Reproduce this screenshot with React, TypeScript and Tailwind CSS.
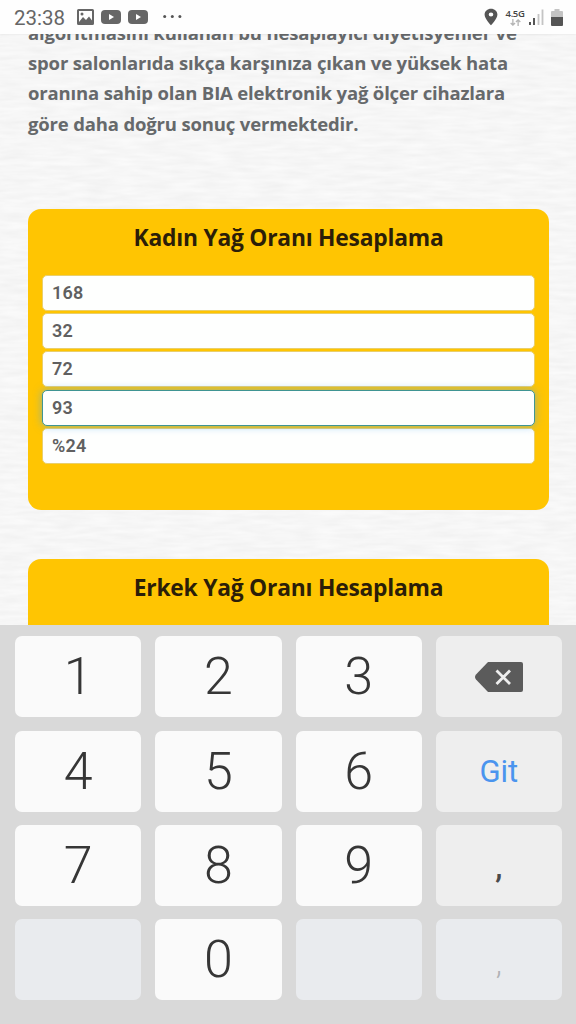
import React from 'react';
import { MdLocationOn } from 'react-icons/md';

interface InputRowProps {
    value: string;
    focused?: boolean;
}

interface KeyProps {
    label: React.ReactNode;
    kind: 'digit' | 'action' | 'comma' | 'empty' | 'disabled' | 'delete';
}

const PARAGRAPH = [
    'algoritmasını kullanan bu hesaplayıcı diyetisyenler ve',
    'spor salonlarıda sıkça karşınıza çıkan ve yüksek hata',
    'oranına sahip olan BIA elektronik yağ ölçer cihazlara',
    'göre daha doğru sonuç vermektedir.'
];

const ROWS: InputRowProps[] = [
    { value: '168' },
    { value: '32' },
    { value: '72' },
    { value: '93', focused: true },
    { value: '%24' }
];

const KEYS: KeyProps[] = [
    { label: '1', kind: 'digit' },
    { label: '2', kind: 'digit' },
    { label: '3', kind: 'digit' },
    { label: <DeleteIcon />, kind: 'delete' },
    { label: '4', kind: 'digit' },
    { label: '5', kind: 'digit' },
    { label: '6', kind: 'digit' },
    { label: 'Git', kind: 'action' },
    { label: '7', kind: 'digit' },
    { label: '8', kind: 'digit' },
    { label: '9', kind: 'digit' },
    { label: ',', kind: 'comma' },
    { label: '', kind: 'empty' },
    { label: '0', kind: 'digit' },
    { label: '', kind: 'empty' },
    { label: ',', kind: 'disabled' }
];

const KEY_STYLES = {
    digit: 'bg-[#fafafa] pt-px text-[#363636] text-[52px] font-light',
    action: 'bg-[#eeeeee] text-[#4a94ee] text-[31px]',
    comma: 'bg-[#eeeeee] pt-1 text-[#4a4a4a] text-[32px] font-medium',
    empty: 'bg-[#e9ebee]',
    disabled: 'bg-[#e9ebee] pt-[6px] text-[#b0b2b5] text-[32px] font-light',
    delete: 'bg-[#eeeeee]'
};

function DeleteIcon() {
    return (
        <svg width="48" height="30" viewBox="0 0 48 30">
            <path d="M13 0H46Q48 0 48 2V28Q48 30 46 30H13L1 17.5Q-1 15 1 12.5Z" fill="#5b5b5b" />
            <path d="M21.5 8.5L35 22M35 8.5L21.5 22" stroke="#eeeeee" strokeWidth="2.8" />
        </svg>
    );
}

function GalleryIcon() {
    return (
        <svg width="17" height="16" viewBox="0 0 17 16">
            <path
                fillRule="evenodd"
                d="M1.5 0h14Q17 0 17 1.5v13Q17 16 15.5 16h-14Q0 16 0 14.5v-13Q0 0 1.5 0ZM2 2v11l4-5 3 3 3-3.5 3 4V2Z"
                fill="#666666"
            />
            <circle cx="5" cy="5" r="1.5" fill="#666666" />
        </svg>
    );
}

function VideoIcon() {
    return (
        <svg width="20" height="14" viewBox="0 0 20 14">
            <rect width="20" height="14" rx="4" fill="#666666" />
            <path d="M8 4L13 7L8 10Z" fill="#ffffff" />
        </svg>
    );
}

function StatusBar() {
    return (
        <header className="relative z-10 flex h-[34px] shrink-0 items-center bg-[#fefefe] pl-[14px] pr-[13px] shadow-[0_1px_2px_rgba(0,0,0,0.06)]">
            <span className="w-[63px] pt-px font-[Roboto,sans-serif] text-[20.5px] leading-[34px] text-[#666666]">23:38</span>
            <GalleryIcon />
            <div className="ml-[7px] flex gap-[7px]">
                <VideoIcon />
                <VideoIcon />
            </div>
            <svg className="ml-[15px]" width="19" height="4" viewBox="0 0 19 4" fill="#555555">
                <circle cx="1.7" cy="1.5" r="1.5" />
                <circle cx="9.3" cy="1.5" r="1.5" />
                <circle cx="16.9" cy="1.5" r="1.5" />
            </svg>
            <div className="ml-auto flex items-center">
                <MdLocationOn className="h-[20px] w-[20px] scale-x-110 text-[#555555]" />
                <div className="ml-1 flex w-[20px] flex-col items-center">
                    <span className="font-['Open_Sans',sans-serif] text-[9.5px] font-semibold leading-[10px] tracking-[-0.4px] text-[#444444]">4.5G</span>
                    <svg width="11" height="7" viewBox="0 0 12 8" fill="none" stroke="#b4b4b4" strokeWidth="1.5">
                        <path d="M3 0V7M0.5 4.5L3 7L5.5 4.5M9 8V1M6.5 3.5L9 1L11.5 3.5" />
                    </svg>
                </div>
                <svg className="ml-1" width="17" height="16" viewBox="0 0 17 16">
                    <path d="M1 13V16M5 9V16" stroke="#555555" strokeWidth="2" />
                    <path d="M9.5 5V16M13.5 0.5V16" stroke="#c4c4c4" strokeWidth="1.8" />
                </svg>
                <svg className="ml-[5px]" width="12" height="17" viewBox="0 0 12 17">
                    <path d="M3.5 0h5v2h2.5q1 0 1 1v6H0V3q0-1 1-1h2.5Z" fill="#c4c4c4" />
                    <path d="M0 8h12v8q0 1-1 1H1q-1 0-1-1Z" fill="#555555" />
                </svg>
            </div>
        </header>
    );
}

// Faint horizontal paper grain behind the article
function PaperTexture() {
    return (
        <svg className="absolute inset-0 h-full w-full" aria-hidden="true">
            <filter id="paper" x="0" y="0" width="100%" height="100%" colorInterpolationFilters="sRGB">
                <feTurbulence type="fractalNoise" baseFrequency="0.035 0.22" numOctaves="2" seed="8" />
                <feColorMatrix values="0.05 0 0 0 0.94  0.05 0 0 0 0.94  0.05 0 0 0 0.94  0 0 0 0 1" />
            </filter>
            <rect width="100%" height="100%" filter="url(#paper)" />
        </svg>
    );
}

function InputRow({ value, focused }: InputRowProps) {
    return (
        <div
            className={`flex h-[36px] items-center rounded-[5px] border bg-[#fefffe] pb-px pl-[9px] font-[Roboto,sans-serif] text-[18px] font-semibold tracking-[0.2px] text-[#606060] ${
                focused
                    ? 'relative border-[#3f9593] shadow-[0_0_8px_rgba(82,168,236,0.65)]'
                    : 'border-[#e9cf6c]'
            }`}
        >
            {value}
        </div>
    );
}

function CardTitle({ children }: { children: string }) {
    return (
        <h2 className="text-center font-['Open_Sans',sans-serif] text-[22.8px] font-bold leading-[30px] tracking-[-0.22px] text-[#2b1e08]">
            {children}
        </h2>
    );
}

function Key({ label, kind }: KeyProps) {
    return (
        <div className={`flex items-center justify-center rounded-[7px] font-[Roboto,sans-serif] leading-none ${KEY_STYLES[kind]}`}>
            {label}
        </div>
    );
}

export default function App() {
    return (
        <div className="flex h-[1024px] w-[576px] flex-col overflow-hidden bg-[#f5f5f5]">
            <StatusBar />

            {/* Page content */}
            <main className="relative h-[591px] shrink-0 overflow-hidden">
                <PaperTexture />
                <div className="relative pl-[28px] pr-[27px]">
                    <div className="-mt-[16.3px] font-['Open_Sans',sans-serif] text-[18.5px] font-bold leading-[30.33px] tracking-[-0.16px] text-[#66696b]">
                        {PARAGRAPH.map((line) => (
                            <p key={line} className="whitespace-nowrap">{line}</p>
                        ))}
                    </div>

                    <section className="mt-[70px] h-[301px] rounded-[13px] bg-[#ffc502] px-[14px] pt-[13.5px]">
                        <CardTitle>Kadın Yağ Oranı Hesaplama</CardTitle>
                        <div className="mt-[22.5px] flex flex-col gap-[2.2px]">
                            {ROWS.map((row) => (
                                <InputRow key={row.value} {...row} />
                            ))}
                        </div>
                    </section>

                    <section className="mt-[49px] h-[301px] rounded-[13px] bg-[#ffc502] px-[14px] pt-[13.5px]">
                        <CardTitle>Erkek Yağ Oranı Hesaplama</CardTitle>
                    </section>
                </div>
            </main>

            {/* Numeric keyboard */}
            <div className="grid flex-1 grid-cols-4 grid-rows-[repeat(4,81px)] gap-x-[14px] gap-y-[13.3px] bg-[#d9d9d9] pl-[15px] pr-[14px] pt-[11.4px]">
                {KEYS.map((key, index) => (
                    <Key key={index} {...key} />
                ))}
            </div>
        </div>
    );
}
